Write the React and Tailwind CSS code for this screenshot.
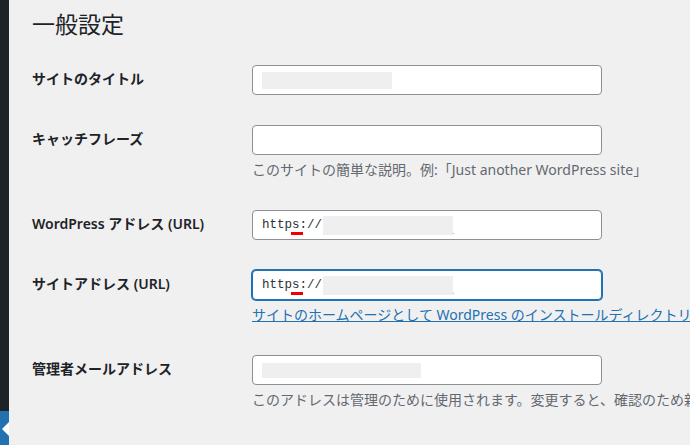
const font = { fontFamily: '"Noto Sans", "Noto Sans CJK JP", sans-serif' };

function Field({ label, children, note, link, focused }) {
  return (
    <div className="flex">
      <div className="w-[220px] shrink-0 pt-[20px] text-[14px] leading-[18px] font-semibold text-[#1d2327]">
        {label}
      </div>
      <div className="py-[15px] min-w-0">
        <div
          className={
            "w-[350px] h-[30px] bg-white rounded-[4px] flex items-center pl-[9px] " +
            (focused
              ? "border border-[#2271b1] shadow-[0_0_0_1px_#2271b1]"
              : "border border-[#8c8f94]")
          }
        >
          {children}
        </div>
        {note && (
          <p className="mt-[4px] text-[14px] leading-[21px] text-[#646970] whitespace-nowrap">{note}</p>
        )}
        {link && (
          <a className="block mt-[4px] text-[14px] leading-[21px] text-[#2271b1] underline whitespace-nowrap">{link}</a>
        )}
      </div>
    </div>
  );
}

function Url() {
  return (
    <div className="flex items-center">
      <span className="text-[12.5px] text-[#2c3338] relative" style={{ fontFamily: '"Liberation Mono", monospace' }}>
        http
        <span className="relative">
          s
          <span className="absolute left-[-1px] right-[-3px] bottom-[-3px] h-[3px] bg-[#f00000]" />
        </span>
        ://
      </span>
      <span className="ml-[1px] w-[130px] h-[19px] bg-[#efefef]" />
      <span className="w-[1px] h-[1px] mt-[16px] bg-[#b0b0b0]" />
    </div>
  );
}

export default function App() {
  return (
    <div className="w-[690px] h-[445px] flex bg-[#f0f0f1] overflow-hidden" style={font}>
      <div className="w-[9px] shrink-0 bg-[#1d2327] flex flex-col justify-end">
        <div className="h-[34px] bg-[#2271b1] relative">
          <svg className="absolute left-[1px] top-[11px]" width="8" height="14" viewBox="0 0 8 14">
            <path d="M8 0 L1 7 L8 14 Z" fill="#fff" />
          </svg>
        </div>
      </div>
      <div className="pl-[23px] flex-1 min-w-0">
        <h1 className="pt-[9px] h-[50px] text-[23px] leading-[30px] font-normal text-[#1d2327]">一般設定</h1>
        <Field label="サイトのタイトル">
          <span className="w-[130px] h-[17px] bg-[#efefef]" />
        </Field>
        <Field label="キャッチフレーズ" note="このサイトの簡単な説明。例:「Just another WordPress site」" />
        <Field label="WordPress アドレス (URL)">
          <Url />
        </Field>
        <Field
          label="サイトアドレス (URL)"
          focused
          link="サイトのホームページとして WordPress のインストールディレクトリとは異なる場所を設定する場合は、ここにアドレスを入力してください。"
        >
          <Url />
        </Field>
        <Field
          label="管理者メールアドレス"
          note="このアドレスは管理のために使用されます。変更すると、確認のため新しいアドレスにメールを送信します。新しいアドレスは確認されるまで有効化されません。"
        >
          <span className="w-[159px] h-[15px] bg-[#efefef]" />
        </Field>
      </div>
    </div>
  );
}
